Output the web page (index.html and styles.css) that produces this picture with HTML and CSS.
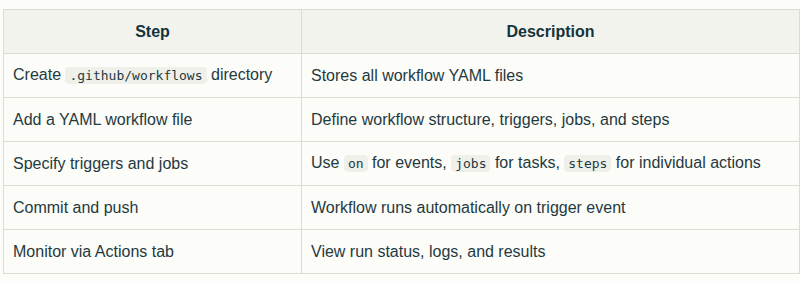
FILE: index.html
```html
<!DOCTYPE html>
<html lang="en">
<head>
<meta charset="utf-8">
<title>GitHub Actions steps</title>
<link rel="stylesheet" href="styles.css">
</head>
<body>
<table class="steps">
  <colgroup><col class="c1"><col class="c2"></colgroup>
  <thead>
    <tr><th>Step</th><th>Description</th></tr>
  </thead>
  <tbody>
    <tr><td>Create <code>.github/workflows</code> directory</td><td>Stores all workflow YAML files</td></tr>
    <tr><td>Add a YAML workflow file</td><td>Define workflow structure, triggers, jobs, and steps</td></tr>
    <tr><td>Specify triggers and jobs</td><td>Use <code>on</code> for events, <code>jobs</code> for tasks, <code>steps</code> for individual actions</td></tr>
    <tr><td>Commit and push</td><td>Workflow runs automatically on trigger event</td></tr>
    <tr><td>Monitor via Actions tab</td><td>View run status, logs, and results</td></tr>
  </tbody>
</table>
</body>
</html>
```
FILE: styles.css
```css
html, body {
  margin: 0;
  background: #fcfcf9;
}
body {
  padding: 9px 2px 8px 3px;
  font-family: "Liberation Sans", Arial, sans-serif;
  font-size: 16px;
  color: #1f3a40;
}
.steps {
  width: 796px;
  border-collapse: collapse;
  table-layout: fixed;
  border: 1px solid #dcdcd6;
}
.c1 { width: 298px; }
.c2 { width: 498px; }
.steps th, .steps td {
  border: 1px solid #dcdcd6;
  height: 44px;
  box-sizing: border-box;
  padding: 0 9px;
  text-align: left;
  line-height: 20px;
}
.steps th {
  background: #f3f3ee;
  font-weight: 600;
  text-align: center;
  color: #13343b;
}
code {
  font-family: "DejaVu Sans Mono", monospace;
  font-size: 13px;
  background: #f0f0ea;
  border-radius: 4px;
  padding: 1px 4px;
}
```
